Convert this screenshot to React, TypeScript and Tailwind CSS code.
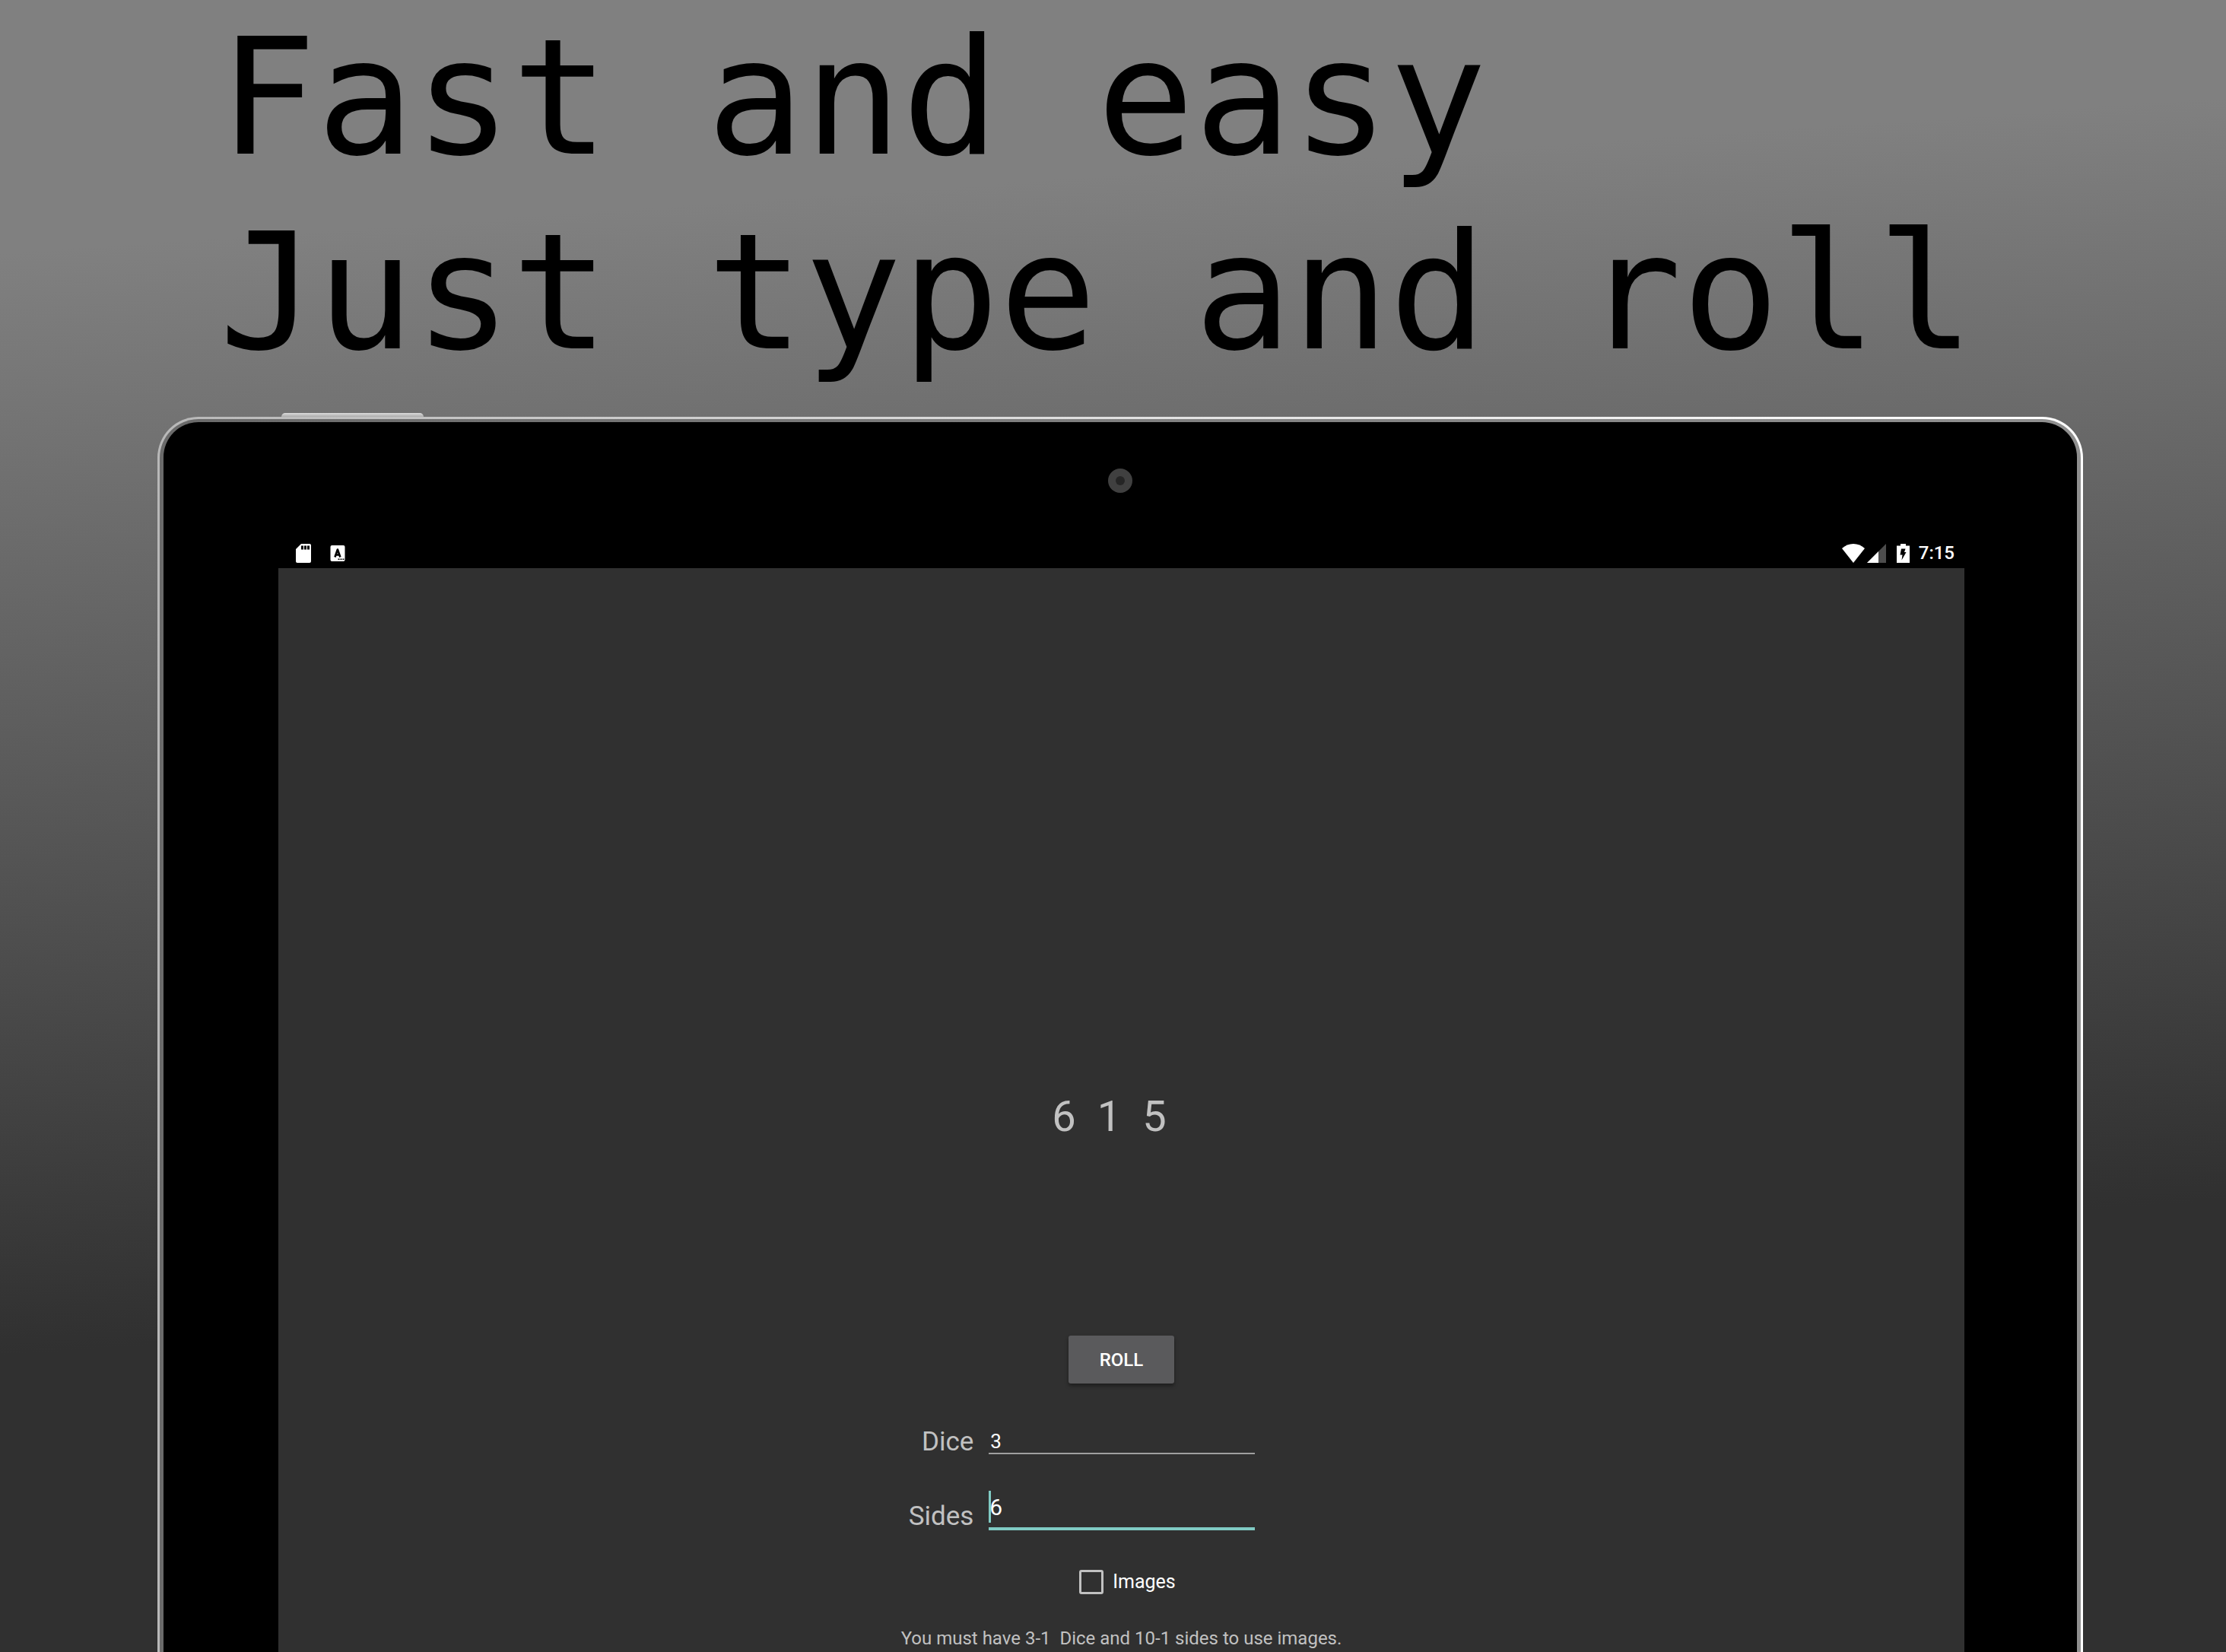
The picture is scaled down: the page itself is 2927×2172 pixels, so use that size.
import { useState } from "react";

function SdCardIcon() {
  return (
    <svg viewBox="0 0 20 25" className="h-[25px] w-5" aria-hidden="true">
      <path d="M7 0H18Q20 0 20 2V23Q20 25 18 25H2Q0 25 0 23V7Z" fill="#fff" />
      <path d="M7 2.500H10V7.500H7ZM11 2.500H14V7.500H11ZM15 2.500H18V7.500H15Z" fill="#000" />
    </svg>
  );
}

function KeyboardIcon() {
  return (
    <svg viewBox="0 0 20 21" className="h-[21px] w-5" aria-hidden="true">
      <rect x="0.5" y="0" width="19" height="21" rx="2" fill="#fff" />
      <path d="M6.400 15.500L9.900 5.500L13.400 15.500M7.600 12.500H12.200" fill="none" stroke="#000" strokeWidth="2.600" strokeLinejoin="round" />
      <path d="M10.500 17.500h2v1.600h-2zM13.500 17.500h2v1.600h-2zM16.500 17.500h2v1.600h-2z" fill="#000" />
    </svg>
  );
}

function WifiIcon() {
  return (
    <svg viewBox="0 0 30 25" className="h-[25px] w-[30px]" aria-hidden="true">
      <path d="M15 25L0 6Q6.500 0 15 0T30 6Z" fill="#fff" />
    </svg>
  );
}

function SignalIcon() {
  return (
    <svg viewBox="0 0 25 25" className="h-[25px] w-[25px]" aria-hidden="true">
      <path d="M0 25L25 0V25Z" fill="#4d4d4d" />
      <path d="M0 25L15 10V25Z" fill="#fff" />
    </svg>
  );
}

function BatteryIcon() {
  return (
    <svg viewBox="0 0 17 25" className="h-[25px] w-[17px]" aria-hidden="true">
      <path d="M5 0H12V2.500H17V25H0V2.500H5Z" fill="#fff" />
      <path d="M6 6.500H11.500L10 11H12.500L6.500 21.500L7.500 14.500H4.500Z" fill="#000" />
    </svg>
  );
}

function StatusBar() {
  return (
    <div className="flex h-[42px] items-center justify-between bg-black pt-[2px] pr-[13px] pl-[23px]">
      <div className="flex items-center gap-[25px]">
        <SdCardIcon />
        <KeyboardIcon />
      </div>
      <div className="flex items-center">
        <WifiIcon />
        <span className="ml-[3px] flex">
          <SignalIcon />
        </span>
        <span className="ml-[14px] flex">
          <BatteryIcon />
        </span>
        <time className="ml-3 text-2xl leading-[25px] font-medium text-white">7:15</time>
      </div>
    </div>
  );
}

export default function App() {
  const [dice, setDice] = useState("3");
  const [sides, setSides] = useState("6");
  const [images, setImages] = useState(false);
  const [rolls, setRolls] = useState([6, 1, 5]);

  const roll = () =>
    setRolls(
      Array.from({ length: Number(dice) || 0 }, () => 1 + Math.floor(Math.random() * (Number(sides) || 1))),
    );

  return (
    <main className="h-screen overflow-hidden bg-[linear-gradient(176deg,#808080_14%,#303030_75%)] font-['Roboto',sans-serif]">
      <h1 className="pl-[288px] font-['DejaVu_Sans_Mono',monospace] text-[213px] leading-[256px] whitespace-nowrap text-black">
        Fast and easy
        <br />
        Just type and roll
      </h1>

      <div className="mr-[188px] ml-[207px] pt-[31px]">
        <div className="ml-[163px] h-[5px] w-[187px] rounded-t-md bg-[linear-gradient(#ddd,#aaa)]" />
        <div className="rounded-t-[54px] bg-[linear-gradient(90deg,#b8b8b8,#e0e0e0_50%,#ffffff)] p-[3px] pb-0">
          <div className="rounded-t-[51px] bg-[linear-gradient(90deg,#6a6a6a,#808080_50%,#909090)] px-[5px] pt-1">
            <div className="rounded-t-[46px] bg-black pr-[148px] pl-[151px]">
              <div className="flex h-[150px] justify-center pt-[61px] pr-1">
                <div className="flex size-8 items-center justify-center rounded-full bg-[#404040]">
                  <div className="size-3 rounded-full bg-[#252525]" />
                </div>
              </div>
              <StatusBar />
              <div className="flex h-[1440px] flex-col items-center bg-[#303030] pt-[688px] text-[#c1c1c1]">
                <output className="mr-8 flex gap-7 text-[56px] leading-[66px]">
                  {rolls.map((value, i) => (
                    <span key={i}>{value}</span>
                  ))}
                </output>
                <button
                  type="button"
                  onClick={roll}
                  className="mt-[255px] h-[63px] w-[139px] rounded-[3px] bg-[#5a5a5c] text-2xl font-medium text-white shadow-[0_3px_5px_rgba(0,0,0,0.4)]"
                >
                  ROLL
                </button>
                <div className="mt-[37px] mr-[104px] grid grid-cols-[auto_350px] gap-x-5">
                  <label htmlFor="dice" className="pt-[19px] text-right text-[35px] leading-[42px]">
                    Dice
                  </label>
                  <input
                    id="dice"
                    inputMode="numeric"
                    value={dice}
                    onChange={(e) => setDice(e.target.value)}
                    className="h-[56px] border-b-2 border-[#a0a0a0] bg-transparent pt-6 pl-[2px] text-[26px] leading-[30px] text-white outline-none"
                  />
                  <label htmlFor="sides" className="mt-[37px] pt-[19px] text-right text-[35px] leading-[42px]">
                    Sides
                  </label>
                  <div className="relative mt-[41px]">
                    <span className="absolute top-[2px] left-0 h-[42px] w-[3px] bg-[#80cbc4]" />
                    <input
                      id="sides"
                      inputMode="numeric"
                      value={sides}
                      onChange={(e) => setSides(e.target.value)}
                      className="h-[54px] w-full border-b-4 border-[#80cbc4] bg-transparent pb-[4px] pl-[1px] text-[30px] leading-[40px] text-white outline-none"
                    />
                  </div>
                </div>
                <label className="mt-[49px] ml-4 flex items-center gap-3 text-[25px] leading-[32px] text-white">
                  <input
                    type="checkbox"
                    checked={images}
                    onChange={(e) => setImages(e.target.checked)}
                    className="size-8 appearance-none rounded-[3px] border-[3px] border-[#c1c1c1] checked:bg-[#80cbc4]"
                  />
                  Images
                </label>
                <p className="mt-[42px] text-2xl leading-[32px] whitespace-pre">
                  {"You must have 3-1  Dice and 10-1 sides to use images."}
                </p>
              </div>
            </div>
          </div>
        </div>
      </div>
    </main>
  );
}
